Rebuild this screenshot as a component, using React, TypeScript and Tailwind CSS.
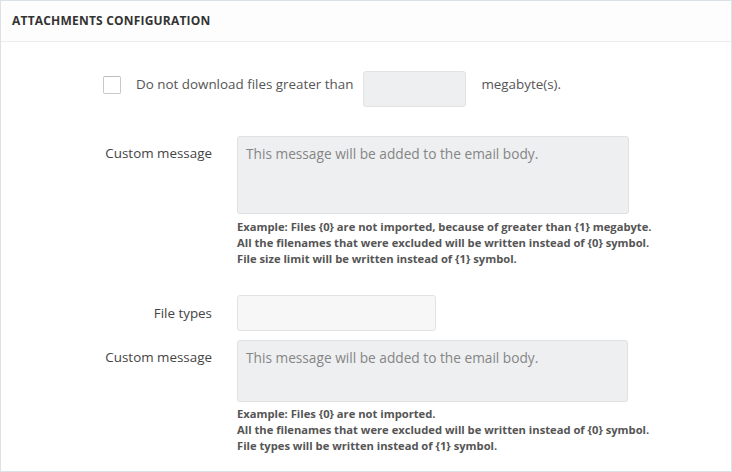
const font = { fontFamily: '"Open Sans", "Liberation Sans", sans-serif' }

const HelpText = ({ lines }: { lines: string[] }) => (
  <div className="text-[11.2px] leading-[16px] font-bold text-[#555]">
    {lines.map((l) => (
      <p key={l}>{l}</p>
    ))}
  </div>
)

const App = () => {
  return (
    <div style={font} className="w-[732px] h-[472px] bg-white border border-[#dae1e9] flex flex-col">
      <div className="h-[41px] border-b border-[#ececec] bg-[#fdfdfd] px-[11px] flex items-center">
        <h2 className="text-[12px] font-bold uppercase tracking-[0.2px] text-[#333]">Attachments configuration</h2>
      </div>

      <div className="flex flex-col">
        <div className="flex items-start mt-[29px] pl-[102px] text-[13.4px] leading-[20px] text-[#555]">
          <div className="mt-[5px] w-[18px] h-[18px] border border-[#c9c9c9] border-t-[#bdbdbd] rounded-[2px] bg-white" />
          <span className="ml-[15px] mt-[3px]">Do not download files greater than</span>
          <input className="ml-[10px] w-[103px] h-[36px] bg-[#eeeff0] border border-[#e2e2e2] rounded-[3px] outline-none" />
          <span className="ml-[15px] mt-[3px]">megabyte(s).</span>
        </div>

        <div className="flex items-start gap-[25px] mt-[29px]">
          <label className="w-[211px] text-right pt-[7px] text-[13.4px] leading-[20px] text-[#444]">Custom message</label>
          <div className="flex flex-col">
            <textarea
              readOnly
              placeholder="This message will be added to the email body."
              className="w-[392px] h-[78px] resize-none bg-[#eeeff1] border border-[#e1e1e1] rounded-[3px] px-[8px] py-[7px] text-[13.7px] leading-[20px] placeholder:text-[#858585] outline-none"
            />
            <div className="mt-[5px]">
              <HelpText
                lines={[
                  'Example: Files {0} are not imported, because of greater than {1} megabyte.',
                  'All the filenames that were excluded will be written instead of {0} symbol.',
                  'File size limit will be written instead of {1} symbol.',
                ]}
              />
            </div>
          </div>
        </div>

        <div className="flex items-center gap-[25px] mt-[28px]">
          <label className="w-[211px] text-right text-[13.4px] leading-[20px] text-[#444]">File types</label>
          <input className="w-[199px] h-[36px] bg-[#f7f7f7] border border-[#e2e2e2] rounded-[3px] outline-none" />
        </div>

        <div className="flex items-start gap-[25px] mt-[9px]">
          <label className="w-[211px] text-right pt-[7px] text-[13.4px] leading-[20px] text-[#444]">Custom message</label>
          <div className="flex flex-col">
            <textarea
              readOnly
              placeholder="This message will be added to the email body."
              className="w-[391px] h-[62px] resize-none bg-[#eeeff1] border border-[#e1e1e1] rounded-[3px] px-[8px] py-[7px] text-[13.7px] leading-[20px] placeholder:text-[#858585] outline-none"
            />
            <div className="mt-[4px]">
              <HelpText
                lines={[
                  'Example: Files {0} are not imported.',
                  'All the filenames that were excluded will be written instead of {0} symbol.',
                  'File types will be written instead of {1} symbol.',
                ]}
              />
            </div>
          </div>
        </div>
      </div>
    </div>
  )
}

export default App
